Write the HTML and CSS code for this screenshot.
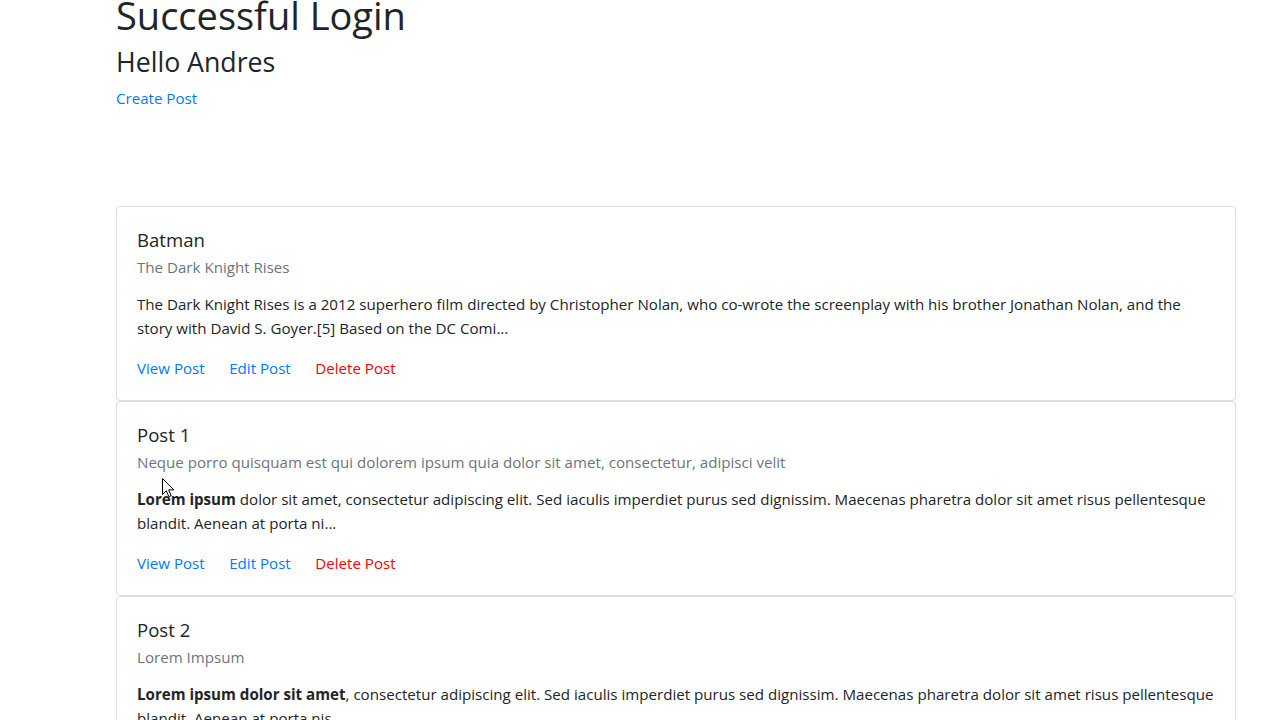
FILE: index.html
```html
<!DOCTYPE html>
<html lang="en">
<head>
<meta charset="utf-8">
<title>Successful Login</title>
<link rel="stylesheet" href="styles.css">
</head>
<body>
<main class="page">
  <header class="intro">
    <h1 class="intro-title">Successful Login</h1>
    <h2 class="intro-greeting">Hello Andres</h2>
    <a class="intro-link" href="#">Create Post</a>
  </header>

  <section class="posts">
    <article class="card">
      <h5 class="card-title">Batman</h5>
      <h6 class="card-subtitle">The Dark Knight Rises</h6>
      <p class="card-text">The Dark Knight Rises is a 2012 superhero film directed by Christopher Nolan, who co-wrote the screenplay with his brother Jonathan Nolan, and the story with David S. Goyer.[5] Based on the DC Comi...</p>
      <div class="card-links">
        <a class="card-link" href="#">View Post</a>
        <a class="card-link" href="#">Edit Post</a>
        <a class="card-link danger" href="#">Delete Post</a>
      </div>
    </article>

    <article class="card">
      <h5 class="card-title">Post 1</h5>
      <h6 class="card-subtitle">Neque porro quisquam est qui dolorem ipsum quia dolor sit amet, consectetur, adipisci velit</h6>
      <p class="card-text"><strong>Lorem ipsum</strong> dolor sit amet, consectetur adipiscing elit. Sed iaculis imperdiet purus sed dignissim. Maecenas pharetra dolor sit amet risus pellentesque blandit. Aenean at porta ni...</p>
      <div class="card-links">
        <a class="card-link" href="#">View Post</a>
        <a class="card-link" href="#">Edit Post</a>
        <a class="card-link danger" href="#">Delete Post</a>
      </div>
    </article>

    <article class="card">
      <h5 class="card-title">Post 2</h5>
      <h6 class="card-subtitle">Lorem Impsum</h6>
      <p class="card-text"><strong>Lorem ipsum dolor sit amet</strong>, consectetur adipiscing elit. Sed iaculis imperdiet purus sed dignissim. Maecenas pharetra dolor sit amet risus pellentesque blandit. Aenean at porta nis...</p>
      <div class="card-links">
        <a class="card-link" href="#">View Post</a>
        <a class="card-link" href="#">Edit Post</a>
        <a class="card-link danger" href="#">Delete Post</a>
      </div>
    </article>
  </section>

  <svg class="cursor" width="13" height="20" viewBox="0 0 13 20" aria-hidden="true">
    <path d="M0.5 0.5 L0.5 16.5 L4.3 12.8 L6.8 18.6 L9.2 17.6 L6.7 11.9 L11.8 11.9 Z" fill="#fff" stroke="#000" stroke-width="1" stroke-linejoin="miter"/>
  </svg>
</main>
</body>
</html>
```

FILE: styles.css
```css
* {
  box-sizing: border-box;
}

html, body {
  margin: 0;
  padding: 0;
  background: #ffffff;
}

body {
  font-family: "Open Sans", "Noto Sans", "Liberation Sans", sans-serif;
  font-size: 15.12px;
  line-height: 24px;
  color: #212529;
  overflow: hidden;
}

.page {
  position: relative;
  width: 1120px;
  margin-left: 116px;
}

.intro {
  display: flex;
  flex-direction: column;
  align-items: flex-start;
}

.intro-title {
  margin: -5px 0 0;
  font-size: 38px;
  font-weight: 400;
  line-height: 40px;
  height: 40px;
}

.intro-greeting {
  margin: 7px 0 0;
  font-size: 26.7px;
  font-weight: 400;
  line-height: 40px;
  height: 40px;
}

.intro-link {
  margin-top: 4px;
  line-height: 24px;
  color: #007bff;
  text-decoration: none;
}

.posts {
  margin-top: 96px;
  display: flex;
  flex-direction: column;
}

.card {
  border: 1px solid rgba(0, 0, 0, 0.125);
  border-radius: 4px;
  padding: 20px;
}

.card-title {
  margin: 1px 0 0;
  font-size: 18.6px;
  font-weight: 400;
  line-height: 24px;
}

.card-subtitle {
  margin: 6px 0 0;
  font-size: 15.12px;
  font-weight: 400;
  line-height: 19px;
  color: #6c757d;
}

.card-text {
  margin: 15px 0 0;
  line-height: 24px;
}

.card-text strong {
  font-weight: 700;
}

.card-links {
  margin-top: 16px;
  display: flex;
  gap: 24.5px;
  line-height: 24px;
}

.card-link {
  color: #007bff;
  text-decoration: none;
}

.card-link.danger {
  color: #ff0000;
}

.cursor {
  position: absolute;
  left: 46px;
  top: 478px;
}
```
